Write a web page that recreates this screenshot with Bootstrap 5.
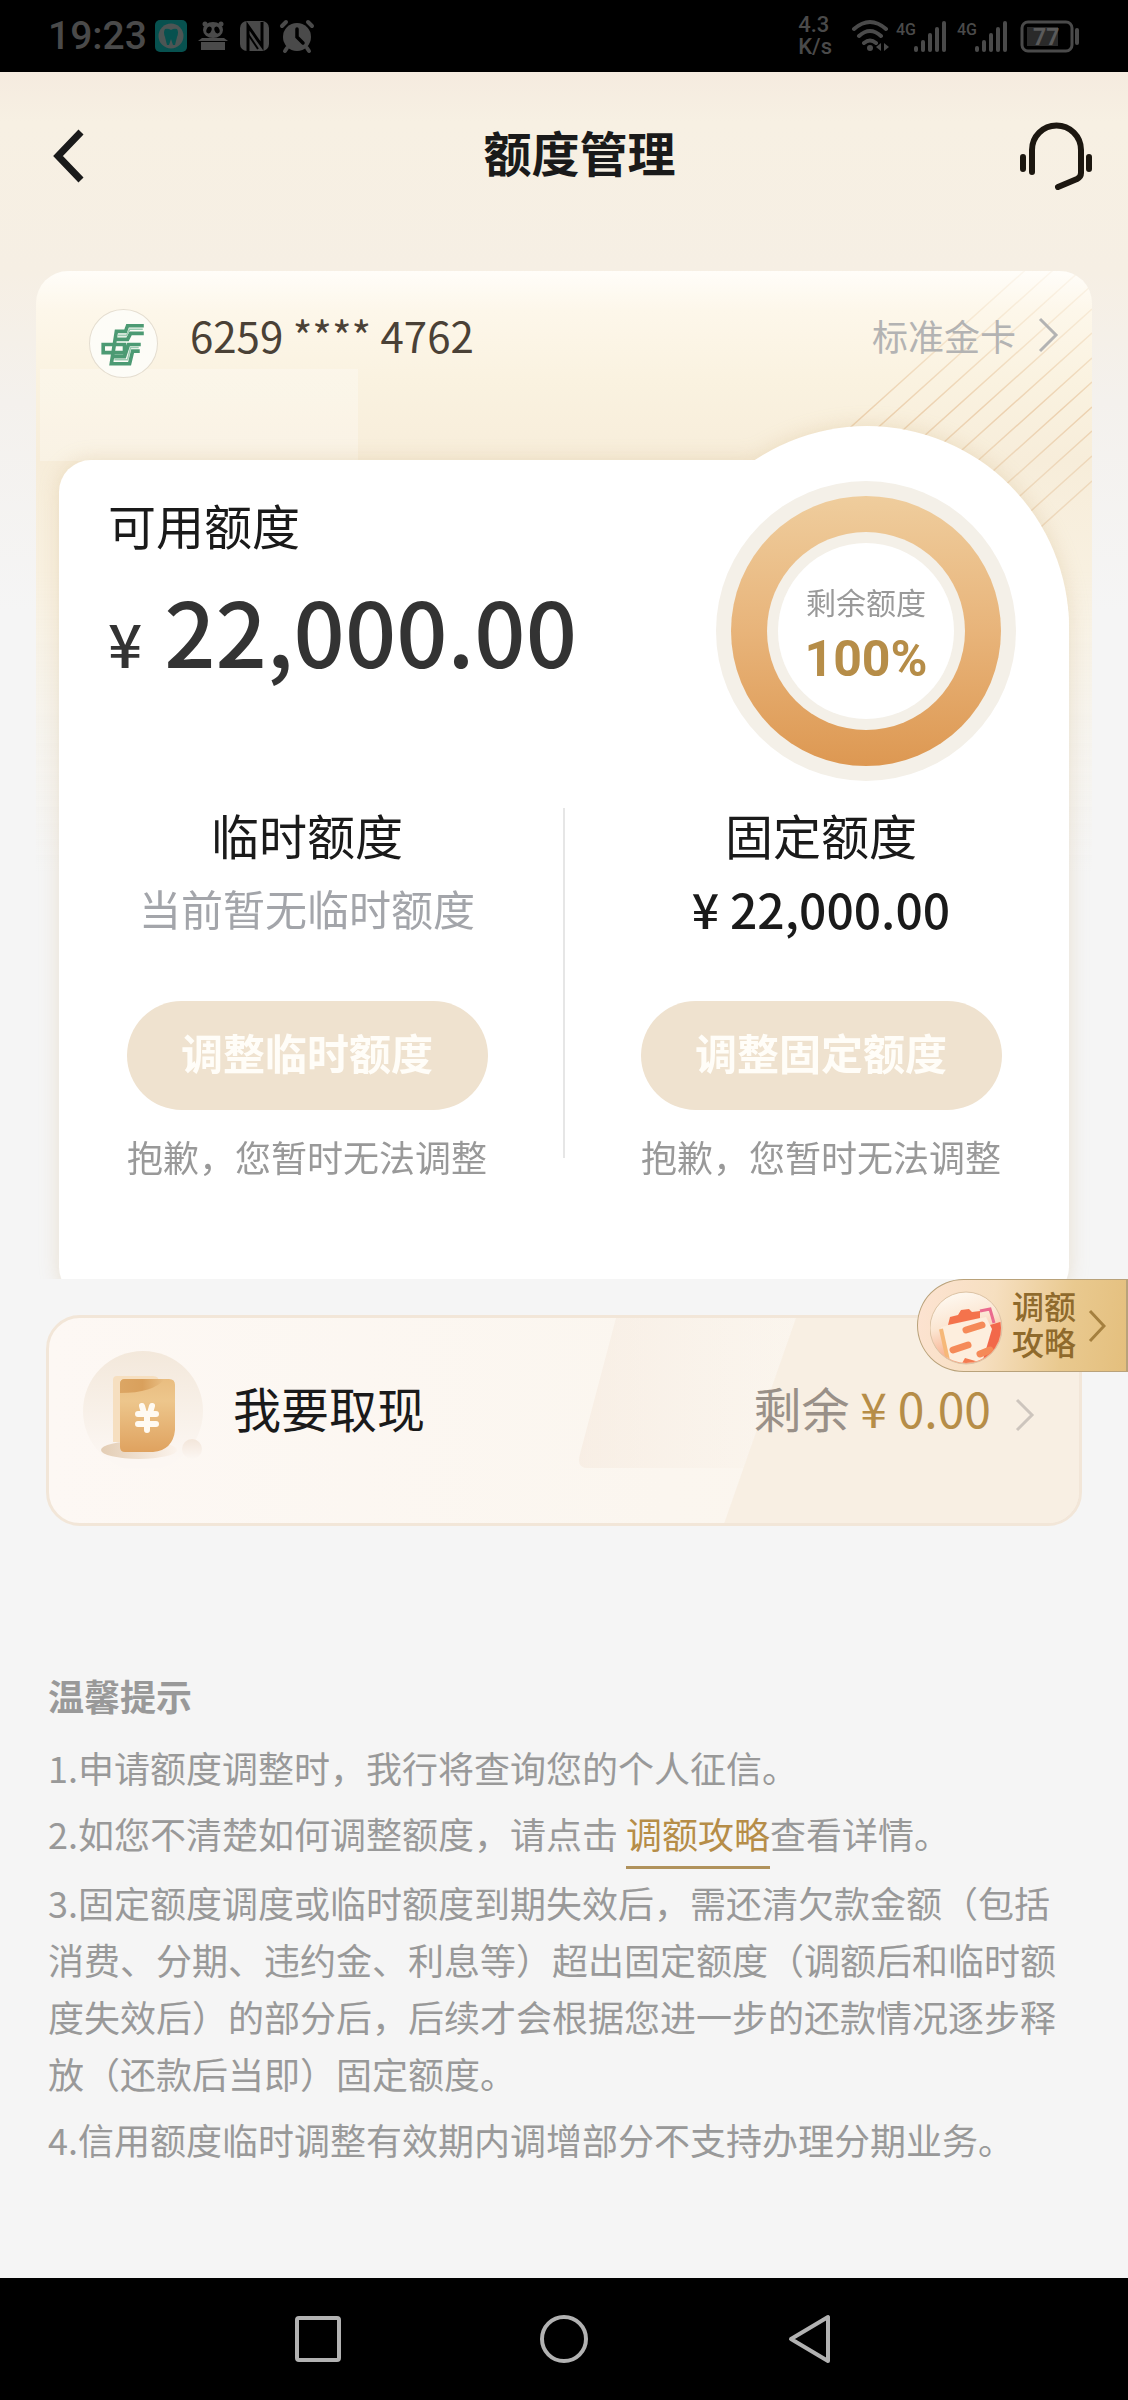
<!DOCTYPE html>
<html lang="zh-CN">
<head>
<meta charset="utf-8">
<meta name="viewport" content="width=device-width, initial-scale=1">
<title>额度管理</title>
<link href="https://cdn.jsdelivr.net/npm/bootstrap@5.3.0/dist/css/bootstrap.min.css" rel="stylesheet">
<style>
  body { font-family: "Noto Sans CJK SC", sans-serif; background: #f5f5f5; color: #1a1a1a; }
  svg { display: block; flex: none; }
  .status { height: 72px; padding: 0 48px; background: #000; color: #4a4a4a; }
  .status-time { font-family: Roboto, sans-serif; font-size: 39px; line-height: 48px; font-weight: 500; }
  .status-rate { font-family: Roboto, sans-serif; font-size: 22px; line-height: 22px; font-weight: 500; }
  .screen { background: linear-gradient(#f5ebdf 0, #f7f0e3 50px, #f6efe4 200px, #f4f1ed 330px, #f5f5f5 540px); }
  .app-head { height: 164px; padding: 0 36px 0 53px; }
  .app-title { font-size: 48px; line-height: 60px; padding: 0 0 6px 54px; }
  .plain { background: none; border: 0; padding: 0; color: inherit; }
  .hero { margin: 35px 36px 0; border-radius: 32px 32px 0 0; overflow: hidden;
    background:
      linear-gradient(rgba(255,255,255,.28), rgba(255,255,255,.28)) 4px 98px / 318px 92px no-repeat,
      linear-gradient(#fffdf9 0, #fdf7ea 40px, #faf2e0 110px, #f7edda 189px, #f8f0e0 300px, rgba(246,243,236,.8) 460px, rgba(245,245,245,0) 600px); }
  .hero-lines { top: 0; right: 0; }
  .card-row { height: 189px; padding: 30px 32px 0 53px; color: #4a4136; }
  .card-no { font-size: 42px; line-height: 68px; margin-left: 32px; }
  .card-type { font-size: 36px; line-height: 68px; color: #b3b3b3; gap: 20px; }
  .panel { margin: 0 23px -20px; padding: 34px 0 118px; background: #fff; border-radius: 32px 168px 32px 32px; }
  .panel-wrap { filter: drop-shadow(0 0 10px rgba(190,150,80,.22)); }
  .bump { width: 404px; height: 404px; top: -34px; right: 23px; border-radius: 50%; background: #fff; }
  .ring { width: 300px; height: 300px; top: 21px; right: 76px; }
  .ring-text { top: 0; left: 0; padding-top: 8px; }
  .ring-label { font-size: 30px; line-height: 40px; color: #999; }
  .ring-value { font-family: Roboto, sans-serif; font-size: 50px; line-height: 60px; color: #b68d48; margin-top: 8px; }
  .label-lg { font-size: 48px; line-height: 60px; }
  .main-pad { padding-left: 49px; }
  .amount { font-size: 90px; line-height: 110px; margin-top: 20px; color: #333; font-weight: 500; }
  .amount-sign { font-size: 60px; line-height: 1; margin-right: 22px; }
  .split { --bs-gutter-x: 18px; padding-top: 120px; }
  .split-line { width: 2px; height: 350px; background: #e6e6e6; top: 124px; left: calc(50% - 1px); }
  .sub-none { font-size: 42px; line-height: 60px; color: #a3a5aa; margin-top: 14px; }
  .sub-amount { font-size: 48px; line-height: 60px; font-weight: 500; margin-top: 14px; }
  .adjust { width: 361px; height: 109px; margin-top: 63px; font-size: 42px; }
  .adjust:disabled { background: #efe2cf; color: #fffdf8; opacity: 1; border: 0; padding-bottom: 14px; }
  .sorry { font-size: 36px; line-height: 50px; color: #999; margin-top: 21px; }
  .cash-zone { padding: 36px 46px 0; }
  .cash { padding: 28px 44px 55px 34px; border: 3px solid #f2e6d8; border-radius: 34px; color: #1a1a1a; isolation: isolate; overflow: hidden;
    background: linear-gradient(90deg, #fdf8f4 0, #fbf6ef 60%, #fbf5ed 100%); }
  .cash-art { top: 0; right: 0; z-index: -1; }
  .cash-name { margin-left: 28px; }
  .cash-left { color: #999088; }
  .gold { color: #b68d48; }
  .guide { top: 0; right: 0; width: 211px; height: 93px; padding-left: 12px; border: 1px solid #b9a27a; border-right-width: 2px;
    border-radius: 47px 0 0 47px; background: linear-gradient(100deg, #fde3d2 0, #f6dfc0 35%, #e9c98f 70%, #e4bf7d 100%); color: #8f6a2c; }
  .guide-text { font-size: 32px; line-height: 36px; font-weight: 500; margin: 0 12px 6px 9px; }
  .tips { padding: 141px 48px 100px; font-size: 36px; line-height: 57px; color: #999; }
  .tips-title { font-size: 36px; line-height: 57px; margin-bottom: 15px; }
  .tips li { margin-bottom: 9px; }
  .tips li.with-link { margin-bottom: 12px; }
  .tips a { color: #b68d48; text-decoration: none; border-bottom: 3px solid #b0925c; padding-bottom: 7px; }
  .sysnav { height: 122px; background: #000; gap: 198px; }
</style>
</head>
<body>
<div class="d-flex flex-column min-vh-100">
  <div class="status d-flex align-items-center justify-content-between">
    <div class="d-flex align-items-center">
      <span class="status-time">19:23</span>
      <svg width="172" height="36" viewBox="0 0 172 36" aria-hidden="true">
        <g transform="translate(4 0)">
          <rect x="4" y="2" width="32" height="32" rx="5" fill="#07514f"/>
          <circle cx="20" cy="18" r="12.500" fill="#4d5554"/>
          <path d="M14 11q3-1 6 1q3-2 6-1q2 3 0 8l-2 8h-2l-2-6l-2 6h-2l-2-8q-2-5 0-8z" fill="#07514f"/>
          <g fill="#4a4a4a">
            <circle cx="54" cy="6" r="2.500"/><circle cx="70" cy="6" r="2.500"/><ellipse cx="62" cy="12" rx="10" ry="8"/>
            <path d="M51 20l-4 3h30l-4-3z"/><rect x="50" y="24" width="24" height="8"/>
          </g>
          <ellipse cx="58" cy="12" rx="2.500" ry="3.500" transform="rotate(20 58 12)"/><ellipse cx="66" cy="12" rx="2.500" ry="3.500" transform="rotate(-20 66 12)"/>
          <rect x="89" y="3" width="29" height="30" rx="7" fill="#4a4a4a"/>
          <path d="M97 33V8l14 20V4" fill="none" stroke="#000" stroke-width="3"/>
          <path d="M97 16l10 15" stroke="#000" stroke-width="2"/>
          <circle cx="146" cy="19" r="14" fill="#4a4a4a"/>
          <path d="M131 8l4-4M161 8l-4-4M136 30l-2 3M156 30l2 3" stroke="#4a4a4a" stroke-width="4" stroke-linecap="round"/>
          <path d="M146 11v8l6 6" fill="none" stroke="#000" stroke-width="3.500" stroke-linecap="round"/>
        </g>
      </svg>
    </div>
    <div class="d-flex align-items-center">
      <div class="status-rate">4.3<br>K/s</div>
      <svg width="248" height="44" viewBox="0 0 248 44" fill="#4a4a4a" aria-hidden="true" font-family="Roboto, sans-serif">
        <g fill="none" stroke="#4a4a4a" stroke-width="4" stroke-linecap="round">
          <path d="M22 15q16-14 32 0M27 22q11-10 22 0M32 29q6-5 12 0"/>
        </g>
        <circle cx="38" cy="34" r="3"/>
        <path d="M44 33l5-4v8zM57 33l-5-4v8z"/>
        <text x="64" y="21" font-size="16" font-weight="500">4G</text>
        <text x="125" y="21" font-size="16" font-weight="500">4G</text>
        <g id="bars"><rect x="82" y="32" width="4" height="6" rx="2"/><rect x="89" y="26" width="4" height="12" rx="2"/><rect x="96" y="19" width="4" height="19" rx="2"/><rect x="103" y="13" width="4" height="25" rx="2"/><rect x="110" y="7" width="4" height="31" rx="2"/></g>
        <use href="#bars" x="61"/>
        <rect x="190" y="8" width="50" height="29" rx="6" fill="none" stroke="#4a4a4a" stroke-width="3"/>
        <rect x="195" y="13" width="31" height="19" fill="#2a2a2a"/>
        <rect x="243" y="14" width="4" height="17" rx="2"/>
        <text x="201" y="31" font-size="23" font-weight="700" fill="#5a5a5a">77</text>
      </svg>
    </div>
  </div>

  <main class="screen flex-grow-1">
    <header class="app-head d-flex align-items-center justify-content-between">
      <button type="button" class="plain pt-1" aria-label="返回">
        <svg width="32" height="56" viewBox="0 0 32 56"><path d="M28 4L5 28l23 24" fill="none" stroke="#1a1a1a" stroke-width="7"/></svg>
      </button>
      <h1 class="app-title fw-bold m-0">额度管理</h1>
      <button type="button" class="plain pt-1" aria-label="客服">
        <svg width="72" height="68" viewBox="0 0 72 68" fill="none" stroke="#1c1710" stroke-width="6" stroke-linecap="round" stroke-linejoin="round"><path d="M12 50V28a24 24 0 0 1 49 0V51q0 4-4 6L38 65M3 35v12M69 35v12"/></svg>
      </button>
    </header>

    <section class="hero position-relative">
      <svg class="hero-lines position-absolute" width="300" height="260" viewBox="0 0 300 260" aria-hidden="true">
        <defs><linearGradient id="fade" gradientUnits="userSpaceOnUse" x1="0" y1="0" x2="0" y2="200"><stop offset="0" stop-color="#e8c9a0" stop-opacity=".12"/><stop offset=".7" stop-color="#e4bd92" stop-opacity=".6"/><stop offset="1" stop-color="#e8cba8" stop-opacity=".6"/></linearGradient></defs>
        <path fill="none" stroke="url(#fade)" stroke-width="1.500" d="M300-61L0 209M300-36L0 234M300-11L0 259M300 14L0 284M300 38L0 308M300 62L0 332M300 87L0 357M300 111L0 381M300 136L0 406M300 160L0 430M300 185L0 455M300 210L0 480"/>
      </svg>
      <div class="card-row d-flex align-items-start position-relative">
        <svg class="mt-2" width="69" height="69" viewBox="0 0 68 68" aria-hidden="true">
          <circle cx="34" cy="34" r="33.500" fill="#fdfcf7" stroke="#e4ddd0"/>
          <g fill="none" stroke="#4c9a73" stroke-width="3.600">
            <path d="M54 16.500H38L36 22H27L22 54H40L43 41.500H50M54 24H41L38 30H26M51 35H39L35 47H23M14 35H35V43H14z"/>
            <path d="M53 20H40L37 26H28M49 38H41L38 50H25" stroke="#9ccab1" stroke-width="1.500"/>
          </g>
        </svg>
        <span class="card-no">6259 **** 4762</span>
        <a href="#" class="card-type ms-auto d-flex align-items-center text-decoration-none">标准金卡
          <svg width="24" height="40" viewBox="0 0 24 40"><path d="M4 4l16 16L4 36" fill="none" stroke="#b3b3b3" stroke-width="3"/></svg>
        </a>
      </div>
      <div class="panel-wrap position-relative">
        <div class="bump position-absolute"></div>
        <div class="panel">
          <div class="main-pad">
            <div class="label-lg">可用额度</div>
            <div class="amount"><span class="amount-sign">¥</span>22,000.00</div>
          </div>
          <div class="row split position-relative">
            <div class="split-line position-absolute p-0"></div>
            <div class="col-6 d-flex flex-column align-items-center">
              <div class="label-lg">临时额度</div>
              <div class="sub-none">当前暂无临时额度</div>
              <button type="button" class="adjust btn rounded-pill fw-bold" disabled>调整临时额度</button>
              <div class="sorry">抱歉，您暂时无法调整</div>
            </div>
            <div class="col-6 d-flex flex-column align-items-center">
              <div class="label-lg">固定额度</div>
              <div class="sub-amount">¥ 22,000.00</div>
              <button type="button" class="adjust btn rounded-pill fw-bold" disabled>调整固定额度</button>
              <div class="sorry">抱歉，您暂时无法调整</div>
            </div>
          </div>
        </div>
        <div class="ring position-absolute">
          <svg width="300" height="300" viewBox="0 0 300 300" aria-hidden="true">
            <defs><linearGradient id="gold" x1="0" y1="0" x2="0" y2="1"><stop offset="0" stop-color="#efcd9d"/><stop offset=".5" stop-color="#e8b47a"/><stop offset="1" stop-color="#dd9852"/></linearGradient></defs>
            <circle cx="150" cy="150" r="150" fill="#f4f0e8"/>
            <circle cx="150" cy="150" r="135" fill="url(#gold)"/>
            <circle cx="150" cy="150" r="99" fill="#f4f0e8"/>
            <circle cx="150" cy="150" r="88" fill="#fff"/>
          </svg>
          <div class="ring-text position-absolute w-100 h-100 d-flex flex-column align-items-center justify-content-center">
            <span class="ring-label">剩余额度</span>
            <span class="ring-value fw-bold">100%</span>
          </div>
        </div>
      </div>
    </section>

    <section class="cash-zone position-relative">
      <a href="#" class="cash position-relative d-flex align-items-center text-decoration-none">
        <svg class="cash-art position-absolute" width="505" height="206" viewBox="0 0 505 206" aria-hidden="true">
          <defs><linearGradient id="slab" x1="0" y1="0" x2="1" y2="0"><stop offset="0" stop-color="#f5e8dc" stop-opacity=".55"/><stop offset="1" stop-color="#f7eee4" stop-opacity=".1"/></linearGradient></defs>
          <path d="M42 0H222L170 150H14q-12 0-8-14z" fill="url(#slab)"/>
          <path d="M222 0H505V206H150z" fill="#f7ecdf" opacity=".75"/>
        </svg>
        <svg width="122" height="122" viewBox="0 0 122 122" aria-hidden="true">
          <defs>
            <linearGradient id="disc" x1="0" y1="0" x2="0" y2="1"><stop offset="0" stop-color="#f3e8db"/><stop offset=".9" stop-color="#fcf7f3"/></linearGradient>
            <linearGradient id="note" x1="0" y1="0" x2="0" y2="1"><stop offset="0" stop-color="#e9bd80"/><stop offset=".3" stop-color="#edc68c"/><stop offset="1" stop-color="#dfa25f"/></linearGradient>
            <linearGradient id="shade" x1="0" y1="0" x2="1" y2="0"><stop offset="0" stop-color="#e3cdb4"/><stop offset="1" stop-color="#fbf3ec"/></linearGradient>
            <linearGradient id="fold" x1="0" y1="0" x2="1" y2="0"><stop offset="0" stop-color="#dca664"/><stop offset=".5" stop-color="#d9a05c"/><stop offset="1" stop-color="#e9bf84"/></linearGradient>
            <linearGradient id="bead" x1="0" y1="0" x2="0" y2="1"><stop offset="0" stop-color="#f3e6da"/><stop offset="1" stop-color="#fcf7f3"/></linearGradient>
          </defs>
          <circle cx="60" cy="65" r="60" fill="url(#disc)"/>
          <ellipse cx="56" cy="104" rx="38" ry="9" fill="url(#shade)"/>
          <circle cx="109" cy="103" r="10" fill="url(#bead)"/>
          <path d="M34 30h36q6 0 6 6v60H30V34q0-4 4-4z" fill="#f6dfc0"/>
          <path d="M42 33h44q6 0 6 6v45q-2 20-22 22H42q-5 0-5-5V38q0-5 5-5z" fill="url(#note)"/>
          <path d="M42 33h40q-12 14-45 14v-9q0-5 5-5z" fill="url(#fold)"/>
          <g stroke="#fffaf2" stroke-width="6" stroke-linecap="round"><path d="M59 60l2 7M69 60l-2 7M55 68h18M55 78h18M64 70v14"/></g>
        </svg>
        <span class="label-lg cash-name">我要取现</span>
        <span class="label-lg ms-auto cash-left">剩余 <span class="gold">¥ 0.00</span></span>
        <svg class="mt-3 ms-4" width="20" height="36" viewBox="0 0 20 36"><path d="M2 3l15 15L2 33" fill="none" stroke="#cdc5bd" stroke-width="3"/></svg>
      </a>
      <a href="#" class="guide position-absolute d-flex align-items-center text-decoration-none">
        <svg class="mt-1" width="73" height="74" viewBox="0 0 73 74" aria-hidden="true">
          <defs>
            <linearGradient id="orb" x1="0" y1="0" x2=".3" y2="1"><stop offset="0" stop-color="#fffdf8"/><stop offset=".5" stop-color="#fbe6d2"/><stop offset="1" stop-color="#f7a27e"/></linearGradient>
            <clipPath id="orbclip"><circle cx="36" cy="37" r="35"/></clipPath>
          </defs>
          <circle cx="36" cy="37" r="36" fill="url(#orb)" stroke="#dcc3a5"/>
          <g clip-path="url(#orbclip)">
            <path d="M60 34l14-4v26L56 72l-10 2z" fill="#f2684a"/>
            <path d="M50 20l10-2 4 14" fill="none" stroke="#ea6a8e" stroke-width="3"/>
            <path d="M11 36l45-10 6 12-10 34-32 8z" fill="#fdeedd"/>
            <path d="M11 38l8 36" stroke="#f6b878" stroke-width="4"/>
            <path d="M18 34l2-8 8-2 3-5 8-1 3 3 8-1v7z" fill="#f4734c"/>
            <path d="M36 39l16-5M23 59l15-5M50 63l10-4" stroke="#f58a58" stroke-width="7" stroke-linecap="round"/>
            <path d="M30 76l5-9 14 4z" fill="#f47a50"/>
          </g>
        </svg>
        <span class="guide-text">调额<br>攻略</span>
        <svg width="18" height="34" viewBox="0 0 18 34"><path d="M2 2l14 15L2 32" fill="none" stroke="#a5803f" stroke-width="3"/></svg>
      </a>
    </section>

    <section class="tips">
      <h2 class="tips-title fw-bold">温馨提示</h2>
      <ul class="list-unstyled m-0">
        <li>1.申请额度调整时，我行将查询您的个人征信。</li>
        <li class="with-link">2.如您不清楚如何调整额度，请点击 <a href="#">调额攻略</a>查看详情。</li>
        <li>3.固定额度调度或临时额度到期失效后，需还清欠款金额（包括消费、分期、违约金、利息等）超出固定额度（调额后和临时额度失效后）的部分后，后续才会根据您进一步的还款情况逐步释放（还款后当即）固定额度。</li>
        <li>4.信用额度临时调整有效期内调增部分不支持办理分期业务。</li>
      </ul>
    </section>
  </main>

  <nav class="sysnav d-flex align-items-center justify-content-center" aria-label="系统导航">
    <button type="button" class="plain" aria-label="最近任务"><svg width="48" height="52" viewBox="0 0 48 52"><rect x="3" y="5" width="42" height="42" rx="2" fill="none" stroke="#b2b2b2" stroke-width="4"/></svg></button>
    <button type="button" class="plain" aria-label="主页"><svg width="48" height="52" viewBox="0 0 48 52"><circle cx="24" cy="26" r="22" fill="none" stroke="#b2b2b2" stroke-width="4"/></svg></button>
    <button type="button" class="plain" aria-label="返回上一级"><svg width="48" height="52" viewBox="0 0 48 52"><path d="M42 4v44L5 26z" fill="none" stroke="#b2b2b2" stroke-width="4" stroke-linejoin="round"/></svg></button>
  </nav>
</div>
<script src="https://cdn.jsdelivr.net/npm/bootstrap@5.3.0/dist/js/bootstrap.bundle.min.js"></script>
</body>
</html>
